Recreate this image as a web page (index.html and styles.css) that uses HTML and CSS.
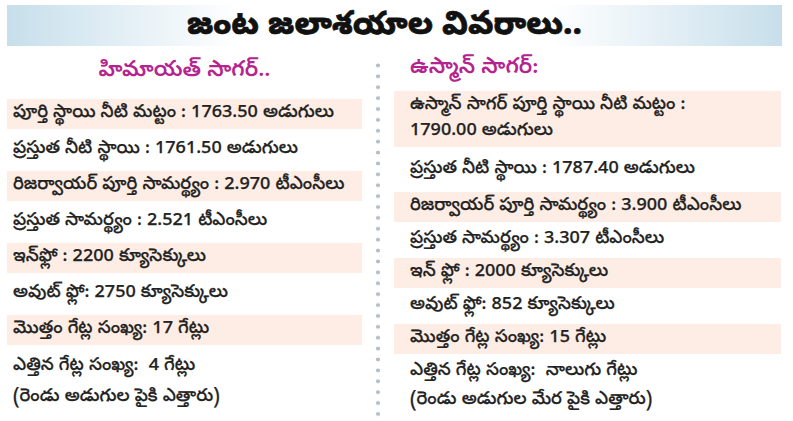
FILE: index.html
```html
<!DOCTYPE html>
<html lang="te">
<head>
<meta charset="utf-8">
<title>జంట జలాశయాల వివరాలు</title>
<link rel="stylesheet" href="styles.css">
</head>
<body>
<div class="page">
  <header class="title-bar">
    <h1 class="title">జంట జలాశయాల వివరాలు..</h1>
  </header>
  <main class="columns">
    <section class="col col-left">
      <h2 class="col-head col-head-center">హిమాయత్ సాగర్..</h2>
      <div class="rows rows-left">
        <p class="row shaded">పూర్తి స్థాయి నీటి మట్టం : 1763.50 అడుగులు</p>
        <p class="row">ప్రస్తుత నీటి స్థాయి : 1761.50 అడుగులు</p>
        <p class="row shaded">రిజర్వాయర్ పూర్తి సామర్థ్యం : 2.970 టీఎంసీలు</p>
        <p class="row">ప్రస్తుత సామర్థ్యం : 2.521 టీఎంసీలు</p>
        <p class="row shaded">ఇన్‌ఫ్లో : 2200 క్యూసెక్కులు</p>
        <p class="row">అవుట్ ఫ్లో: 2750 క్యూసెక్కులు</p>
        <p class="row shaded">మొత్తం గేట్ల సంఖ్య: 17 గేట్లు</p>
        <p class="row multi">ఎత్తిన గేట్ల సంఖ్య:&nbsp; 4 గేట్లు<br>(రెండు అడుగుల పైకి ఎత్తారు)</p>
      </div>
    </section>
    <div class="divider" aria-hidden="true"></div>
    <section class="col col-right">
      <h2 class="col-head">ఉస్మాన్ సాగర్:</h2>
      <div class="rows rows-right">
        <p class="row shaded multi-first">ఉస్మాన్ సాగర్ పూర్తి స్థాయి నీటి మట్టం :<br>1790.00 అడుగులు</p>
        <p class="row spaced">ప్రస్తుత నీటి స్థాయి : 1787.40 అడుగులు</p>
        <p class="row shaded">రిజర్వాయర్ పూర్తి సామర్థ్యం : 3.900 టీఎంసీలు</p>
        <p class="row">ప్రస్తుత సామర్థ్యం : 3.307 టీఎంసీలు</p>
        <p class="row shaded">ఇన్ ఫ్లో : 2000 క్యూసెక్కులు</p>
        <p class="row">అవుట్ ఫ్లో: 852 క్యూసెక్కులు</p>
        <p class="row shaded">మొత్తం గేట్ల సంఖ్య: 15 గేట్లు</p>
        <p class="row multi">ఎత్తిన గేట్ల సంఖ్య:&nbsp; నాలుగు గేట్లు<br>(రెండు అడుగుల మేర పైకి ఎత్తారు)</p>
      </div>
    </section>
  </main>
</div>
</body>
</html>
```
FILE: styles.css
```css
* { box-sizing: border-box; }
html, body { margin: 0; padding: 0; background: #fff; }
body {
  font-family: "Noto Sans Telugu", "Lohit Telugu", "Ramabhadra", "Mandali", "Pothana2000", "Noto Sans", "DejaVu Sans", sans-serif;
  color: #222;
}
.page {
  width: 793px;
  height: 421px;
  padding: 5px 11px 0 7px;
  overflow: hidden;
}
.title-bar {
  height: 41px;
  display: flex;
  align-items: center;
  justify-content: center;
  background: linear-gradient(to right, #c7dfeb 0%, #ffffff 30%, #ffffff 70%, #c7dfeb 100%);
}
.title {
  margin: 5px 0 0 -20px;
  font-size: 32px;
  font-weight: 800;
  line-height: 1;
  color: #111;
  -webkit-text-stroke: 0.6px #111;
}
.columns {
  display: grid;
  grid-template-columns: 355px 4px 387px;
  column-gap: 14px;
  height: 375px;
}
.col { display: flex; flex-direction: column; }
.col-head {
  margin: 0;
  height: 52px;
  display: flex;
  align-items: center;
  font-size: 22px;
  font-weight: 600;
  color: #b5238f;
}
.col-head-center { justify-content: center; }
.col-right .col-head { padding-left: 16px; height: 45px; }
.rows { display: flex; flex-direction: column; }
.rows-left { gap: 6px; margin-top: 0.5px; }
.rows-right { gap: 3px; }
.row {
  margin: 0;
  font-size: 18px;
  font-weight: 500;
  line-height: 30px;
  white-space: nowrap;
  -webkit-text-stroke: 0.25px #222;
}
.rows-left .row { padding-left: 6px; }
.rows-right .row { padding-left: 16px; }
.shaded { background: #fdede4; }
.multi-first { line-height: 26px; padding-top: 2px; padding-bottom: 2px; }
.spaced { margin: 5px 0 4px; }
.rows-left .multi { line-height: 31px; }
.rows-right .multi { line-height: 29px; }
.divider {
  margin-top: 14px;
  height: 358px;
  background-image: radial-gradient(circle, #b2bec9 1.7px, transparent 2.2px);
  background-size: 4px 10.9px;
  background-repeat: repeat-y;
}
```
